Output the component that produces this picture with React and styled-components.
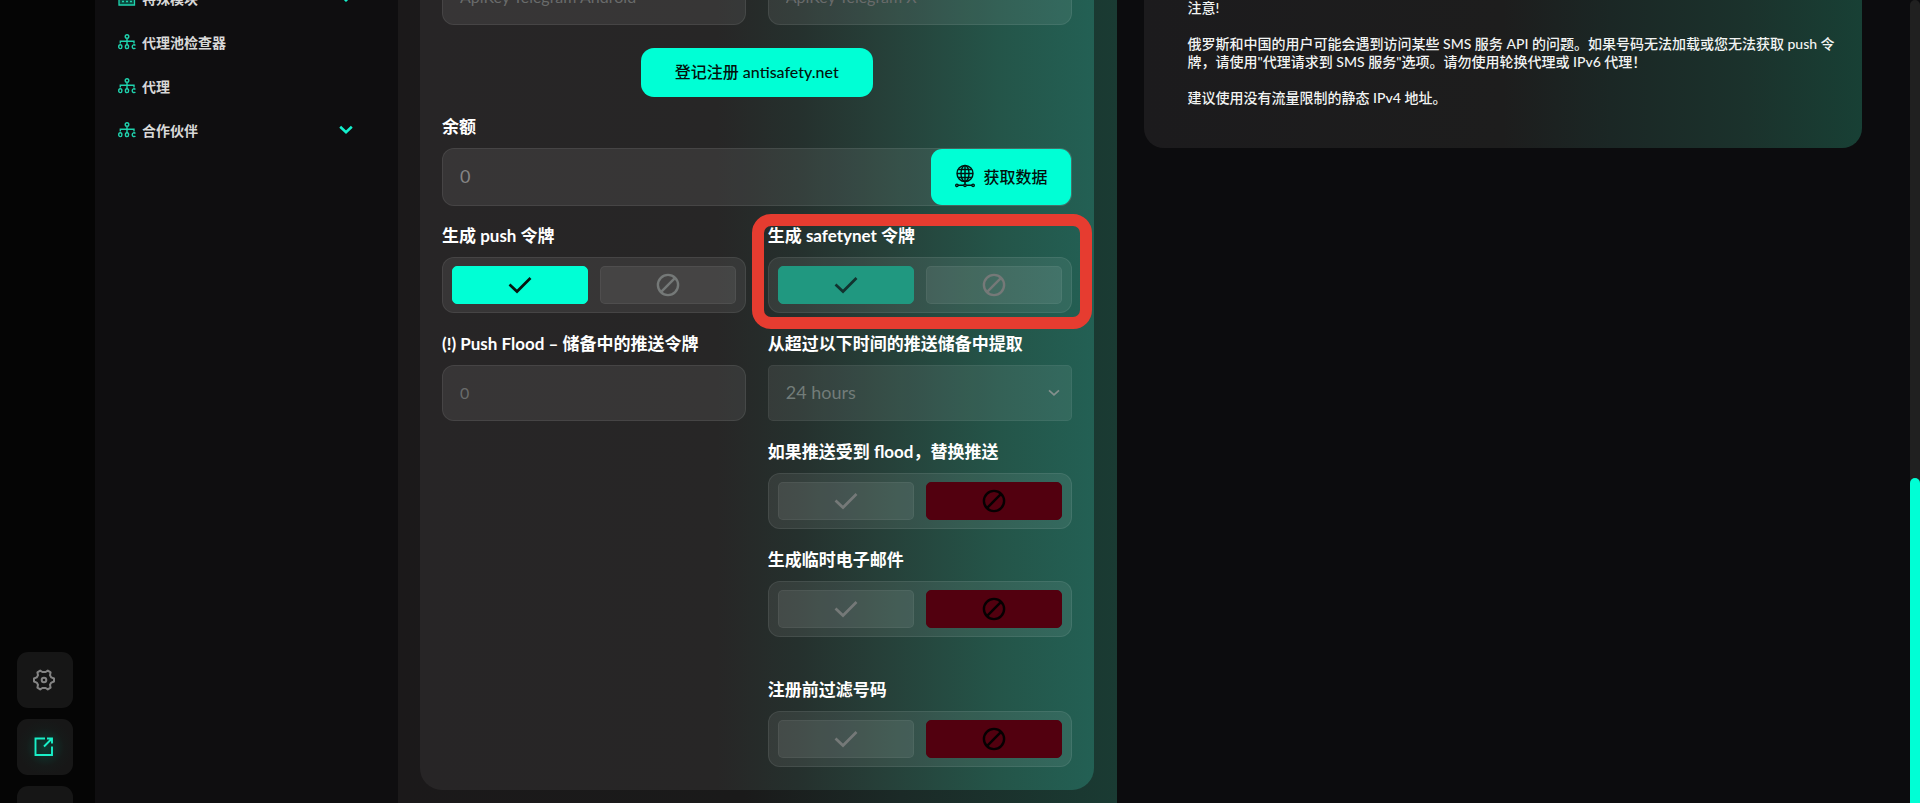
import React, { useId, useState } from 'react';
import styled, { createGlobalStyle, css } from 'styled-components';

const ACCENT = '#00ffd5';

const GlobalStyle = createGlobalStyle`
  * { box-sizing: border-box; }
  body {
    margin: 0;
    background: #0c0c0e;
    color: #fff;
    font-family: Lato, "Noto Sans CJK SC", sans-serif;
    overflow: hidden;
  }
  button, input, select { font: inherit; }
`;

const Shell = styled.div`
  display: grid;
  grid-template-columns: 95px 303px minmax(0, 1fr) 27px minmax(0, 1fr) 48px 10px;
  height: 100vh;
  overflow: hidden;
`;

const Rail = styled.nav`
  display: flex;
  flex-direction: column;
  justify-content: flex-end;
  gap: 11px;
  padding-left: 17px;
  margin-bottom: -39px;
  background: #050505;
`;

const RailButton = styled.button`
  display: grid;
  place-items: center;
  flex: none;
  width: 56px;
  height: 56px;
  padding: 0 2px 0 0;
  border: 0;
  border-radius: 11px;
  background: #161616;
  color: ${(p) => (p.$active ? '#19f0c8' : '#848484')};
  ${(p) => p.$active && css`
    background: radial-gradient(circle, #0d3a31 0%, #161a19 48%, #171717 70%);
  `}
`;

const Sidebar = styled.nav`
  background: #0f0e10;
  overflow: hidden;
`;

const Menu = styled.ul`
  margin: -24px 0 0;
  padding: 0 45px 0 23px;
  list-style: none;
`;

const MenuLink = styled.a`
  display: flex;
  align-items: center;
  gap: 6px;
  height: 44px;
  color: #d8d8d8;
  font-size: 14px;
  font-weight: 700;
  text-decoration: none;
  svg { flex: none; color: #1fd3ae; }
  svg:last-child:not(:first-child) { margin-left: auto; color: #14f0cd; }
`;

const Main = styled.main`
  display: flex;
  flex-direction: column;
  justify-content: flex-end;
  min-height: 0;
  padding: 0 23px 13px 22px;
  background: linear-gradient(90deg, #1b191a 0%, #1a1a1a 48%, #1b2a27 70%, #1a3b33 100%);
`;

const Card = styled.form`
  display: flex;
  flex-direction: column;
  gap: 18px;
  flex: none;
  padding: 22px 22px 23px;
  border-radius: 22px;
  background: linear-gradient(90deg, #272526 0%, #272626 44%, #25302d 56%, #264039 69%, #245549 86%, #236054 100%);
`;

const Columns = styled.div`
  display: grid;
  grid-template-columns: 1fr 1fr;
  gap: 22px;
`;

const Column = styled.div`
  display: flex;
  flex-direction: column;
  gap: 19px;
`;

const FieldBox = styled.div`
  display: flex;
  flex-direction: column;
  gap: 9px;
  position: relative;
  margin-top: ${(p) => (p.$apart ? '22px' : '0')};
`;

const labelStyle = css`
  font-size: 17px;
  font-weight: 700;
  line-height: 24px;
  white-space: nowrap;
`;
const Label = styled.label`${labelStyle}`;
const Caption = styled.span`${labelStyle}`;

const surface = css`
  border: 1px solid rgba(255, 255, 255, 0.08);
  border-radius: 12px;
  background: rgba(255, 255, 255, 0.075);
`;

const TextInput = styled.input`
  ${surface}
  width: 100%;
  height: 56px;
  padding: 0 17px 2px;
  color: #767676;
  font-size: 16px;
  outline: 0;
  &::placeholder { color: #696b6b; opacity: 1; }
`;

const Combined = styled.div`
  ${surface}
  display: flex;
  height: 58px;
`;

const BareInput = styled.input`
  flex: 1;
  min-width: 0;
  padding: 0 17px 2px;
  border: 0;
  background: none;
  color: #858585;
  font-size: 18px;
  outline: 0;
`;

const AccentButton = styled.button`
  display: flex;
  align-items: center;
  justify-content: center;
  gap: 8px;
  border: 0;
  border-radius: ${(p) => (p.$large ? '13px' : '11px')};
  background: ${ACCENT};
  color: #03120e;
  font-size: 16px;
  font-weight: 500;
`;

const RegisterButton = styled(AccentButton)`
  align-self: center;
  height: 49px;
  margin-top: 5px;
  padding: 0 34px 4px;
`;

const FetchButton = styled(AccentButton)`
  width: 140px;
  padding: 0 0 2px 2px;
`;

const SelectWrap = styled.div`
  position: relative;
  svg {
    position: absolute;
    right: 12px;
    top: 22px;
    color: #84908d;
    pointer-events: none;
  }
`;

const Select = styled.select`
  ${surface}
  display: block;
  width: 100%;
  height: 56px;
  padding: 0 17px 2px;
  border-radius: 5px;
  border-color: rgba(255, 255, 255, 0.05);
  appearance: none;
  color: #727c79;
  font-size: 18px;
  opacity: 1;
`;

const Toggle = styled.div`
  ${surface}
  display: grid;
  grid-template-columns: 1fr 1fr;
  gap: 12px;
  height: 56px;
  padding: 8px 9px;
`;

const tones = {
  yes: css`background: ${ACCENT}; border-color: ${ACCENT}; color: #07150f;`,
  no: css`background: #52000f; border-color: #52000f; color: #060002;`,
  locked: css`background: #209880; border-color: #209880; color: #12332f;`,
  idle: css`
    background: rgba(255, 255, 255, 0.075);
    border-color: rgba(255, 255, 255, 0.05);
    color: #757978;
  `,
};

const Choice = styled.label`
  display: grid;
  place-items: center;
  position: relative;
  border: 1px solid;
  border-radius: 5px;
  ${(p) => tones[p.$tone]}
  input {
    position: absolute;
    inset: 0;
    width: 100%;
    height: 100%;
    margin: 0;
    opacity: 0;
  }
`;

const Highlight = styled.span`
  position: absolute;
  inset: -10px -20px -16px -16px;
  border: 12px solid #e63c30;
  border-radius: 19px;
  pointer-events: none;
`;

const Notice = styled.aside`
  grid-column: 5;
  align-self: start;
  margin-top: -45px;
  padding: 44px 18px 41px 44px;
  border-radius: 20px;
  background: linear-gradient(90deg, #1c1b1d 0%, #1d1d1d 50%, #1b2725 65%, #1b322c 84%, #184035 100%);
  color: #f2f4f3;
  font-size: 14px;
  font-weight: 500;
  line-height: 18px;
  p { margin: 0 0 18px; }
  p:last-child { margin: 0; }
`;

const ScrollTrack = styled.div`
  grid-column: 7;
  display: grid;
  grid-template-rows: 59.5% 1fr;
  border-radius: 5px 5px 0 0;
  background: #202020;
`;

const ScrollThumb = styled.div`
  grid-row: 2;
  border-radius: 5px 5px 0 0;
  background: ${ACCENT};
`;

const TreeIcon = () => (
  <svg width="18" height="16" viewBox="0 0 18 16" fill="none" stroke="currentColor" strokeWidth="1.4" aria-hidden="true">
    <circle cx="9" cy="2.5" r="1.8" />
    <path d="M9 4.4V11M2.3 9.5V7.2H16V9.5" />
    <ellipse cx="2.3" cy="12.7" rx="1.6" ry="1.9" />
    <ellipse cx="9" cy="12.7" rx="1.6" ry="1.9" />
    <path d="M17.4 11.4C16.3 10.3 14.2 10.8 14.2 12.7S16.3 15.1 17.4 14" />
  </svg>
);

const GridIcon = () => (
  <svg width="18" height="16" viewBox="0 0 18 16" fill="none" stroke="currentColor" strokeWidth="1.3" aria-hidden="true">
    <path d="M1 1H16.5V15H1Z" fill="#0b4b40" />
    <path d="M1 5H16.5M4 8H6M8 8H10M12 8H14M4 11.5H6M8 11.5H10M12 11.5H14" />
  </svg>
);

const Chevron = ({ size = 14, weight = 2.6 }) => (
  <svg width={size} height={size} viewBox="0 0 14 14" fill="none" stroke="currentColor" strokeWidth={weight} aria-hidden="true">
    <path d="M1.2 3.8L7 9.2L12.8 3.8" />
  </svg>
);

const Check = () => (
  <svg width="24" height="24" viewBox="0 0 24 24" fill="none" stroke="currentColor" strokeWidth="2.7" aria-hidden="true">
    <path d="M1.5 11.5L9 18.5L22.5 5" />
  </svg>
);

const Ban = () => (
  <svg width="24" height="24" viewBox="0 0 24 24" fill="none" stroke="currentColor" strokeWidth="2.4" aria-hidden="true">
    <circle cx="12" cy="12" r="10.1" />
    <path d="M4.9 19.1L19.1 4.9" />
  </svg>
);

const Globe = () => (
  <svg width="20" height="24" viewBox="0 0 20 24" fill="none" stroke="currentColor" strokeWidth="1.4" aria-hidden="true">
    <circle cx="10" cy="9.5" r="8" />
    <ellipse cx="10" cy="9.5" rx="4" ry="8" />
    <path d="M10 1.5V20M2 9.5H18M3.4 5.5H16.6M3.4 13.5H16.6M3 21.3H8.6M11.4 21.3H17" />
    <circle cx="1.9" cy="21.3" r="1.2" />
    <circle cx="10" cy="21.3" r="1.2" />
    <circle cx="18.1" cy="21.3" r="1.2" />
  </svg>
);

const Gear = () => (
  <svg width="24" height="24" viewBox="0 0 24 24" fill="none" stroke="currentColor" strokeWidth="2" strokeLinejoin="round" aria-hidden="true">
    <path d="M22 10.5V13.5L19.3 14.6L18 16.8L18.6 19.6L15.8 21.4L13.6 20H10.4L8.2 21.4L5.4 19.6L6 16.8L4.7 14.6L2 13.5V10.5L4.7 9.4L6 7.2L5.4 4.4L8.2 2.6L10.4 4H13.6L15.8 2.6L18.6 4.4L18 7.2L19.3 9.4Z" />
    <circle cx="12" cy="12" r="2.3" />
  </svg>
);

const OpenOut = () => (
  <svg width="22" height="22" viewBox="0 0 22 22" fill="none" stroke="currentColor" strokeWidth="1.9" aria-hidden="true">
    <path d="M12 2.5H2.5V19H19V10.5M14 2.5H19V7.5M11 10.5L18.5 3" />
  </svg>
);

const Drop = () => (
  <svg width="22" height="24" viewBox="0 0 22 24" fill="none" stroke="currentColor" strokeWidth="1.6" aria-hidden="true">
    <path d="M11 2C8 6 4 10 4 15A7 7 0 0 0 18 15C18 10 14 6 11 2Z" />
  </svg>
);

const menuItems = [
  { text: '特殊模块', icon: GridIcon, open: true },
  { text: '代理池检查器', icon: TreeIcon },
  { text: '代理', icon: TreeIcon },
  { text: '合作伙伴', icon: TreeIcon, open: true },
];

function ToggleField({ label, initial, locked, marked, apart }) {
  const id = useId();
  const [on, setOn] = useState(initial);
  const yesTone = on ? (locked ? 'locked' : 'yes') : 'idle';
  return (
    <FieldBox $apart={apart}>
      <Caption id={id}>{label}</Caption>
      <Toggle role="radiogroup" aria-labelledby={id}>
        <Choice $tone={yesTone}>
          <input type="radio" name={id} aria-label="是" checked={on} disabled={locked} onChange={() => setOn(true)} />
          <Check />
        </Choice>
        <Choice $tone={on ? 'idle' : 'no'}>
          <input type="radio" name={id} aria-label="否" checked={!on} disabled={locked} onChange={() => setOn(false)} />
          <Ban />
        </Choice>
      </Toggle>
      {marked && <Highlight />}
    </FieldBox>
  );
}

export default function App() {
  return (
    <>
      <GlobalStyle />
      <Shell>
        <Rail>
          <RailButton type="button" aria-label="设置"><Gear /></RailButton>
          <RailButton type="button" aria-label="打开" $active><OpenOut /></RailButton>
          <RailButton type="button" aria-label="主题"><Drop /></RailButton>
        </Rail>

        <Sidebar>
          <Menu>
            {menuItems.map(({ text, icon: Icon, open }) => (
              <li key={text}>
                <MenuLink href="#">
                  <Icon />
                  <span>{text}</span>
                  {open && <Chevron />}
                </MenuLink>
              </li>
            ))}
          </Menu>
        </Sidebar>

        <Main>
          <Card onSubmit={(e) => e.preventDefault()}>
            <Columns>
              <TextInput aria-label="ApiKey Telegram Android" placeholder="ApiKey Telegram Android" />
              <TextInput aria-label="ApiKey Telegram X" placeholder="ApiKey Telegram X" />
            </Columns>
            <RegisterButton type="button" $large>登记注册 antisafety.net</RegisterButton>

            <FieldBox>
              <Label htmlFor="balance">余额</Label>
              <Combined>
                <BareInput id="balance" defaultValue="0" />
                <FetchButton type="button"><Globe />获取数据</FetchButton>
              </Combined>
            </FieldBox>

            <Columns>
              <Column>
                <ToggleField label="生成 push 令牌" initial />
                <FieldBox>
                  <Label htmlFor="flood">(!) Push Flood – 储备中的推送令牌</Label>
                  <TextInput id="flood" placeholder="0" />
                </FieldBox>
              </Column>
              <Column>
                <ToggleField label="生成 safetynet 令牌" initial locked marked />
                <FieldBox>
                  <Label htmlFor="age">从超过以下时间的推送储备中提取</Label>
                  <SelectWrap>
                    <Select id="age" disabled>
                      <option>24 hours</option>
                    </Select>
                    <Chevron size={12} weight={2} />
                  </SelectWrap>
                </FieldBox>
                <ToggleField label="如果推送受到 flood，替换推送" initial={false} />
                <ToggleField label="生成临时电子邮件" initial={false} />
                <ToggleField label="注册前过滤号码" initial={false} apart />
              </Column>
            </Columns>
          </Card>
        </Main>

        <Notice>
          <p>注意!</p>
          <p>
            俄罗斯和中国的用户可能会遇到访问某些 SMS 服务 API 的问题。如果号码无法加载或您无法获取 push 令牌，请使用"代理请求到 SMS 服务"选项。请勿使用轮换代理或 IPv6 代理！
          </p>
          <p>建议使用没有流量限制的静态 IPv4 地址。</p>
        </Notice>

        <ScrollTrack aria-hidden="true"><ScrollThumb /></ScrollTrack>
      </Shell>
    </>
  );
}
